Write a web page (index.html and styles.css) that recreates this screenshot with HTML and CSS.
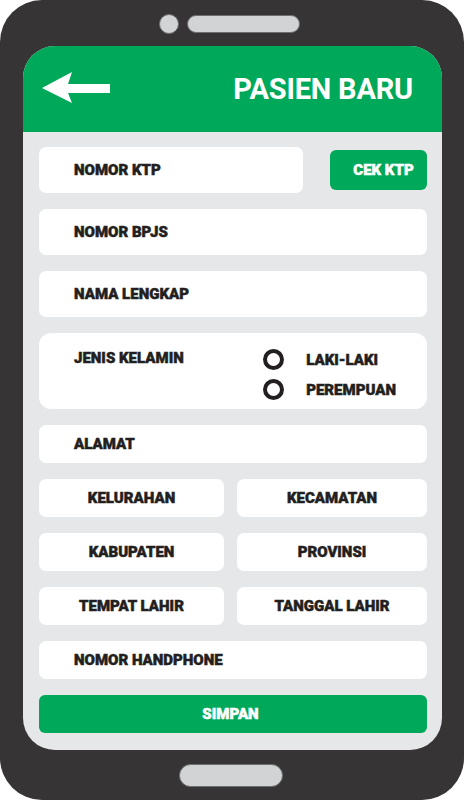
FILE: index.html
```html
<!DOCTYPE html>
<html lang="id">
<head>
<meta charset="utf-8">
<title>Pasien Baru</title>
<link rel="stylesheet" href="styles.css">
</head>
<body>
<div class="phone">
  <div class="phone-top">
    <span class="camera"></span>
    <span class="speaker"></span>
  </div>
  <div class="screen">
    <header class="appbar">
      <svg class="back" width="70" height="34" viewBox="0 0 70 34" aria-hidden="true">
        <polygon points="0,17 30,1 26,13 68,13 68,22 26,22 30,32" fill="#ffffff"/>
      </svg>
      <h1 class="title">PASIEN BARU</h1>
    </header>
    <main class="form">
      <div class="row-ktp">
        <div class="field field-ktp">NOMOR KTP</div>
        <div class="btn btn-cek">CEK KTP</div>
      </div>
      <div class="field field-lg">NOMOR BPJS</div>
      <div class="field field-lg">NAMA LENGKAP</div>
      <div class="field field-gender">
        <span class="gender-label">JENIS KELAMIN</span>
        <div class="radios">
          <div class="radio"><span class="dot"></span>LAKI-LAKI</div>
          <div class="radio"><span class="dot"></span>PEREMPUAN</div>
        </div>
      </div>
      <div class="field">ALAMAT</div>
      <div class="grid2">
        <div class="field center">KELURAHAN</div>
        <div class="field center">KECAMATAN</div>
      </div>
      <div class="grid2">
        <div class="field center">KABUPATEN</div>
        <div class="field center">PROVINSI</div>
      </div>
      <div class="grid2">
        <div class="field center">TEMPAT LAHIR</div>
        <div class="field center">TANGGAL LAHIR</div>
      </div>
      <div class="field">NOMOR HANDPHONE</div>
      <div class="btn btn-save">SIMPAN</div>
    </main>
  </div>
  <div class="phone-bottom">
    <span class="home"></span>
  </div>
</div>
</body>
</html>
```

FILE: styles.css
```css
* { box-sizing: border-box; }
html, body { margin: 0; padding: 0; background: #ffffff; }
body { width: 464px; height: 800px; overflow: hidden; }

.phone {
  width: 464px;
  height: 800px;
  background: #363435;
  border-radius: 42px;
  display: flex;
  flex-direction: column;
  padding: 0 22px 0 23px;
}

.phone-top {
  height: 46px;
  display: flex;
  align-items: center;
  justify-content: center;
  gap: 8px;
  padding-right: 6px;
  padding-top: 2px;
}
.camera {
  width: 20px; height: 20px;
  border-radius: 50%;
  background: #d1d3d4;
  border: 1px solid #6d6e71;
}
.speaker {
  width: 113px; height: 18px;
  border-radius: 9px;
  background: #d1d3d4;
  border: 1px solid #6d6e71;
}

.screen {
  height: 704px;
  background: #e6e7e8;
  border-radius: 32px;
  overflow: hidden;
  display: flex;
  flex-direction: column;
}

.appbar {
  height: 86px;
  background: #00a859;
  display: flex;
  align-items: center;
  justify-content: space-between;
  padding: 0 29px 0 19px;
}
.back { display: block; margin-top: -3px; }
.title {
  margin: 0;
  color: #ffffff;
  font-family: Roboto, "Liberation Sans", sans-serif;
  font-weight: 700;
  font-size: 29px;
  letter-spacing: -0.2px;
}

.form {
  flex: 1;
  display: flex;
  flex-direction: column;
  gap: 16px;
  padding: 15px 15px 16px 16px;
  font-family: Roboto, "Liberation Sans", sans-serif;
  font-weight: 900;
  font-size: 15px;
  color: #231f20;
  -webkit-text-stroke: 0.5px currentColor;
}

.field {
  background: #ffffff;
  border-radius: 7px;
  height: 38px;
  display: flex;
  align-items: center;
  padding-left: 35px;
}
.field-lg { height: 46px; }
.field.center { justify-content: center; padding-left: 0; }

.row-ktp {
  display: flex;
  align-items: center;
  gap: 27px;
}
.field-ktp { width: 264px; height: 46px; }

.btn {
  background: #00a859;
  color: #ffffff;
  border-radius: 6px;
  display: flex;
  align-items: center;
  justify-content: center;
}
.btn-cek {
  width: 97px;
  height: 40px;
  padding-left: 10px;
}
.btn-save { height: 38px; padding-right: 5px; }

.field-gender {
  height: 76px;
  border-radius: 12px;
  align-items: flex-start;
  justify-content: space-between;
  padding: 16px 31px 0 35px;
}
.radios {
  display: flex;
  flex-direction: column;
  gap: 9px;
}
.radio {
  display: flex;
  align-items: center;
  gap: 22px;
  height: 21px;
}
.dot {
  width: 21px; height: 21px;
  border-radius: 50%;
  border: 4px solid #231f20;
  background: #ffffff;
  -webkit-text-stroke: 0;
}

.grid2 {
  display: grid;
  grid-template-columns: 185px 1fr;
  gap: 13px;
}

.phone-bottom {
  flex: 1;
  display: flex;
  align-items: center;
  justify-content: center;
  padding-right: 3px;
}
.home {
  width: 104px; height: 23px;
  border-radius: 12px;
  background: #d1d3d4;
  border: 1px solid #6d6e71;
}
```
